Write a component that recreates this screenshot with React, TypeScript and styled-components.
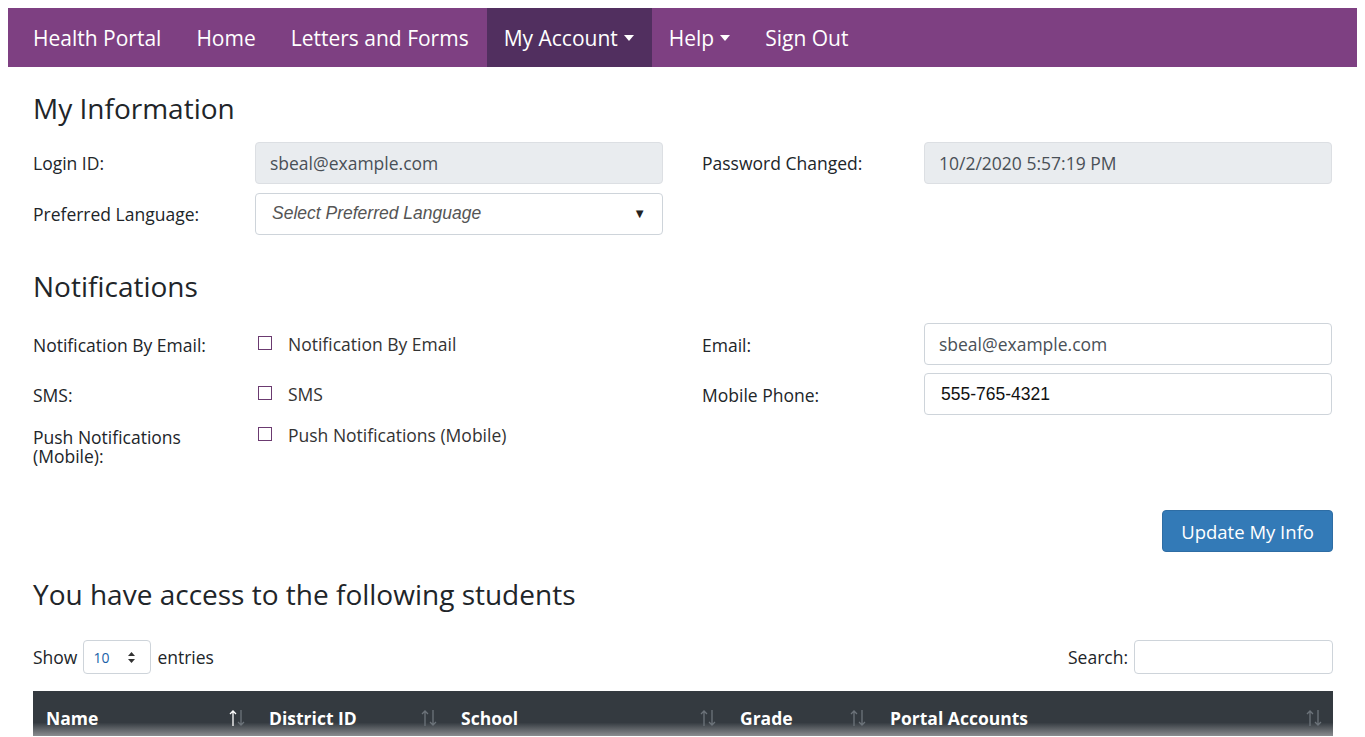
import React from 'react';
import styled, { createGlobalStyle } from 'styled-components';

const Global = createGlobalStyle`
  body { margin: 8px; font-family: "Open Sans", "Noto Sans", sans-serif; color: #212529; background: #fff; }
  * { box-sizing: border-box; }
`;

const Nav = styled.nav`
  display: flex;
  align-items: stretch;
  height: 59px;
  background: #7e4082;
  padding-left: 8px;
`;

const NavItem = styled.a<{ active?: boolean }>`
  display: flex;
  align-items: center;
  gap: 6px;
  padding: 0 18px 0 17px;
  color: #fff;
  font-size: 21px;
  text-decoration: none;
  background: ${p => (p.active ? '#512f5f' : 'transparent')};
`;

const Caret = styled.span`
  width: 0; height: 0;
  border-left: 5px solid transparent;
  border-right: 5px solid transparent;
  border-top: 6px solid #fff;
`;

const Main = styled.main`
  padding: 0 24px 0 25px;
`;

const H = styled.h2<{ top: number; bottom: number }>`
  font-weight: 400;
  font-size: 28px;
  margin: ${p => p.top}px 0 ${p => p.bottom}px;
  line-height: 1.2;
`;

const Grid = styled.div`
  display: grid;
  grid-template-columns: 222px 408px 39px 222px 408px;
  row-gap: 8px;
  align-items: center;
`;

const Label = styled.div<{ top?: boolean }>`
  font-size: 17.5px;
  line-height: 19px;
  align-self: ${p => (p.top ? 'start' : 'center')};
  padding-top: ${p => (p.top ? '5px' : '2px')};
`;

const Input = styled.div<{ disabled?: boolean; dark?: boolean }>`
  height: 42px;
  border: 1px solid ${p => (p.disabled ? '#dcdfe3' : '#ced4da')};
  border-radius: 4px;
  background: ${p => (p.disabled ? '#e9ecef' : '#fff')};
  display: flex;
  align-items: center;
  padding: 0 14px;
  font-size: 17.5px;
  color: ${p => (p.dark ? '#111' : '#495057')};
  font-family: ${p => (p.dark ? '"Liberation Sans", Arial, sans-serif' : 'inherit')};
  padding-left: ${p => (p.dark ? '16px' : '14px')};
`;

const Select = styled(Input)`
  justify-content: space-between;
  font-family: "Liberation Sans", Arial, sans-serif;
  font-style: italic;
  padding: 0 16px;
  color: #555;
`;

const Check = styled.label<{ top?: boolean }>`
  display: flex;
  align-items: flex-start;
  gap: 16px;
  font-size: 17.5px;
  line-height: 20px;
  color: #333;
  align-self: ${p => (p.top ? 'start' : 'center')};
  span.box {
    width: 14px; height: 14px; margin: 2px 0 0 3px;
    border: 1px solid #6b3a70;
    background: #fff;
    flex: none;
  }
`;

const Spacer = styled.div``;

const ActionRow = styled.div`
  display: flex;
  justify-content: flex-end;
  margin-top: 44px;
`;

const Button = styled.button`
  background: #337ab7;
  color: #fff;
  border: 1px solid #2e6da4;
  border-radius: 4px;
  height: 42px;
  padding: 0 18px;
  font-family: inherit;
  font-size: 18.5px;
`;

const TableTools = styled.div`
  display: flex;
  justify-content: space-between;
  align-items: center;
  font-size: 17.5px;
  margin: 0 0 17px;
`;

const ToolGroup = styled.div`
  display: flex;
  align-items: center;
  gap: 6px;
`;

const LenSelect = styled.div`
  width: 68px; height: 34px;
  border: 1px solid #ced4da;
  border-radius: 4px;
  display: flex; align-items: center; justify-content: space-between;
  padding: 2px 14px 0 9px;
  font-size: 14px;
  color: #1a5fa8;
`;

const SearchBox = styled.div`
  width: 199px; height: 34px;
  border: 1px solid #ced4da;
  border-radius: 4px;
`;

const Head = styled.div`
  display: grid;
  grid-template-columns: 223px 192px 279px 150px 1fr;
  height: 45px;
  background: linear-gradient(#343a40 0, #343a40 70%, #8a8d90 100%);
  color: #fff;
  font-weight: 700;
  font-size: 17.5px;
`;

const Th = styled.div`
  display: flex;
  align-items: center;
  justify-content: space-between;
  padding: 10px 10px 0 13px;
`;

const Sort = ({ up }: { up?: boolean }) => (
  <svg width="18" height="20" viewBox="0 0 18 20">
    <path d="M5 18V3M2 6l3-3 3 3" stroke={up ? '#fff' : '#6c737a'} strokeWidth="1.3" fill="none" />
    <path d="M13 2v15M10 14l3 3 3-3" stroke="#6c737a" strokeWidth="1.3" fill="none" />
  </svg>
);

const Spin = () => (
  <svg width="9" height="13" viewBox="0 0 9 13">
    <path d="M4.5 1L8 5H1z M4.5 12L8 8H1z" fill="#333" />
  </svg>
);

export default function App() {
  return (
    <>
      <Global />
      <Nav>
        <NavItem>Health Portal</NavItem>
        <NavItem>Home</NavItem>
        <NavItem>Letters and Forms</NavItem>
        <NavItem active>My Account <Caret /></NavItem>
        <NavItem>Help <Caret /></NavItem>
        <NavItem>Sign Out</NavItem>
      </Nav>
      <Main>
        <H top={25} bottom={16}>My Information</H>
        <Grid style={{ rowGap: 9 }}>
          <Label>Login ID:</Label>
          <Input disabled>sbeal@example.com</Input>
          <Spacer />
          <Label>Password Changed:</Label>
          <Input disabled>10/2/2020 5:57:19 PM</Input>
          <Label>Preferred Language:</Label>
          <Select>Select Preferred Language <span style={{ fontStyle: 'normal', fontSize: 13, color: '#222' }}>▼</span></Select>
        </Grid>
        <H top={35} bottom={20}>Notifications</H>
        <Grid>
          <Label>Notification By Email:</Label>
          <Check><span className="box" />Notification By Email</Check>
          <Spacer />
          <Label>Email:</Label>
          <Input>sbeal@example.com</Input>
          <Label>SMS:</Label>
          <Check><span className="box" />SMS</Check>
          <Spacer />
          <Label>Mobile Phone:</Label>
          <Input dark>555-765-4321</Input>
          <Label top>Push Notifications<br />(Mobile):</Label>
          <Check top style={{ paddingTop: 2 }}><span className="box" />Push Notifications (Mobile)</Check>
        </Grid>
        <ActionRow><Button>Update My Info</Button></ActionRow>
        <H top={26} bottom={28}>You have access to the following students</H>
        <TableTools>
          <ToolGroup>Show <LenSelect>10 <Spin /></LenSelect> entries</ToolGroup>
          <ToolGroup>Search: <SearchBox /></ToolGroup>
        </TableTools>
        <Head>
          <Th>Name <Sort up /></Th>
          <Th>District ID <Sort /></Th>
          <Th>School <Sort /></Th>
          <Th>Grade <Sort /></Th>
          <Th>Portal Accounts <Sort /></Th>
        </Head>
      </Main>
    </>
  );
}
